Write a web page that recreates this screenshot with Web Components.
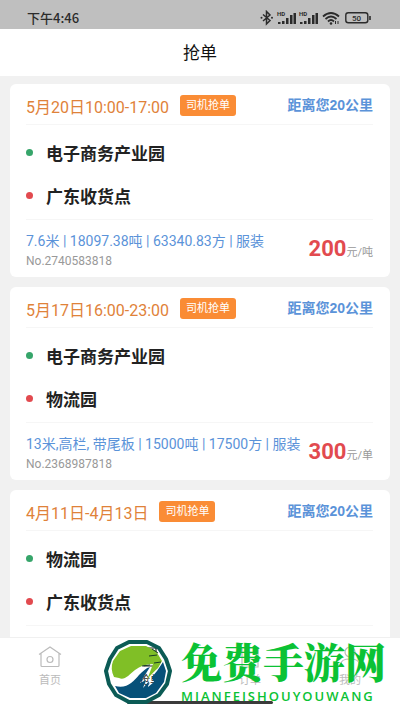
<!DOCTYPE html>
<html lang="zh-CN">
<head>
<meta charset="UTF-8">
<meta name="viewport" content="width=device-width, initial-scale=1">
<title>抢单</title>
<style>
:root {
  --page-bg: #f1f1f1;
  --orange: #fa8c35;
  --date-color: #df8239;
  --blue: #5b93d9;
  --red: #e24a4f;
  --green: #36a56a;
  --muted: #999;
}

body {
  margin: 0;
  background-color: var(--page-bg);
  color: #222;
  font-family: Roboto, "Noto Sans CJK SC", sans-serif;
}
</style>
</head>
<body>
<order-app>
  <order-card date="5月20日10:00-17:00" from="电子商务产业园" to="广东收货点"
    spec="7.6米 | 18097.38吨 | 63340.83方 | 服装" number="No.2740583818" price="200" unit="元/吨"></order-card>
  <order-card date="5月17日16:00-23:00" from="电子商务产业园" to="物流园"
    spec="13米,高栏, 带尾板 | 15000吨 | 17500方 | 服装" number="No.2368987818" price="300" unit="元/单"></order-card>
  <order-card date="4月11日-4月13日" from="物流园" to="广东收货点"></order-card>
</order-app>

<script>
class StatusBar extends HTMLElement {
  constructor() {
    super();
    this.attachShadow({ mode: 'open' });
  }

  connectedCallback() {
    this.shadowRoot.innerHTML = `
      <style>
        :host {
          display: flex;
          align-items: center;
          justify-content: space-between;
          height: 29px;
          padding: 6px 28px 0 27px;
          box-sizing: border-box;
          background-color: #bfbfbf;
          color: #2b2b2b;
          font-size: 13px;
          font-weight: 500;
        }
        time { font-family: "Noto Sans CJK SC", sans-serif; }
        svg { display: block; }
        text { font: 700 6px Roboto, sans-serif; }
        .level { font-size: 8px; font-weight: 500; }
      </style>
      <time>下午4:46</time>
      <svg width="112" height="16" viewBox="0 0 112 16" fill="none" stroke="#2b2b2b" aria-hidden="true">
        <path d="M3 4.500l7 6-3.500 3.500V1.500L10 5l-7 6" stroke-width="1.500"/>
        <circle cx="1.500" cy="7.700" r="1" fill="#2b2b2b" stroke="none"/>
        <circle cx="12" cy="7.700" r="1" fill="#2b2b2b" stroke="none"/>
        <g id="sim" fill="#2b2b2b" stroke="none">
          <text x="17" y="6">HD</text>
          <path d="M18 12h2.500v2H18zM22 11h2.500v3H22zM26 8h2.500v6H26zM30 5h2.500v9H30zM33.500 3H36v11h-2.500z"/>
        </g>
        <use href="#sim" x="22"/>
        <path d="M63 6.500q8-7 16 0M65.500 9q5.500-5 11 0M68 11.500q3-3 6 0" stroke-width="1.800"/>
        <circle cx="71" cy="13.500" r="1.300" fill="#2b2b2b" stroke="none"/>
        <path d="M75.500 11v3M78 14v-3" stroke-width="1"/>
        <rect x="85.800" y="2.800" width="22" height="10" rx="2.500" stroke-width="1.400"/>
        <path d="M110 6v4" stroke-width="1.600"/>
        <text class="level" x="92" y="10.800" fill="#2b2b2b" stroke="none">50</text>
      </svg>
    `;
  }
}

class OrderCard extends HTMLElement {
  constructor() {
    super();
    this.attachShadow({ mode: 'open' });
  }

  connectedCallback() {
    this.render();
  }

  render() {
    const attr = (name) => this.getAttribute(name) || '';

    this.shadowRoot.innerHTML = `
      <style>
        :host {
          display: block;
          flex: none;
          padding: 0 17px 0 16px;
          border-radius: 6px;
          background-color: #fff;
        }
        header {
          display: flex;
          align-items: center;
          height: 38px;
          padding-top: 2px;
          border-bottom: 1px solid #f6f6f6;
        }
        h2 {
          margin: 2px 11px 0 0;
          color: var(--date-color);
          font-size: 16px;
          font-weight: 400;
        }
        button {
          height: 21px;
          padding: 0 6px;
          border: 0;
          border-radius: 3px;
          background-color: var(--orange);
          color: #fff;
          font: 400 11px/21px Roboto, "Noto Sans CJK SC", sans-serif;
        }
        .distance {
          margin-left: auto;
          color: var(--blue);
          font: 700 14px/20px "Liberation Sans", "Noto Sans CJK SC", sans-serif;
        }
        ul {
          margin: 0;
          padding: 6px 0 2px;
          list-style: none;
          border-bottom: 1px solid #f6f6f6;
        }
        li {
          display: flex;
          align-items: center;
          gap: 13px;
          height: 43px;
          font-size: 17px;
          font-weight: 600;
        }
        li::before {
          content: "";
          width: 7px;
          height: 7px;
          border-radius: 50%;
          background-color: var(--green);
        }
        li:last-child::before { background-color: var(--red); }
        footer {
          display: flex;
          align-items: center;
          justify-content: space-between;
          height: 57px;
          white-space: nowrap;
        }
        p { margin: 0; }
        .summary {
          padding-top: 4px;
          line-height: 20px;
        }
        .spec {
          color: var(--blue);
          font-size: 14px;
        }
        .number {
          color: var(--muted);
          font-size: 12px;
        }
        .price {
          color: var(--muted);
          font-size: 11px;
        }
        strong {
          color: var(--red);
          font-size: 22px;
          line-height: 24px;
        }
      </style>
      <header>
        <h2>${attr('date')}</h2>
        <button type="button">司机抢单</button>
        <span class="distance">距离您20公里</span>
      </header>
      <ul>
        <li>${attr('from')}</li>
        <li>${attr('to')}</li>
      </ul>
      <footer>
        <div class="summary">
          <p class="spec">${attr('spec')}</p>
          <p class="number">${attr('number')}</p>
        </div>
        <p class="price"><strong>${attr('price')}</strong>${attr('unit')}</p>
      </footer>
    `;
  }
}

class TabItem extends HTMLElement {
  constructor() {
    super();
    this.attachShadow({ mode: 'open' });
  }

  connectedCallback() {
    this.shadowRoot.innerHTML = `
      <style>
        :host {
          display: block;
          flex: 1;
          color: #bbb;
        }
        :host([active]) { color: #222; }
        a {
          display: flex;
          flex-direction: column;
          align-items: center;
          gap: 3px;
          padding-top: 7px;
          color: inherit;
          font-size: 11px;
          line-height: 18px;
          text-decoration: none;
        }
      </style>
      <a href="#"><slot name="icon"></slot><slot></slot></a>
    `;
  }
}

class TabBar extends HTMLElement {
  constructor() {
    super();
    this.attachShadow({ mode: 'open' });
  }

  connectedCallback() {
    this.shadowRoot.innerHTML = `
      <style>
        :host {
          display: block;
          flex: none;
          height: 74px;
          box-sizing: border-box;
          border-top: 1px solid #f0f0f0;
          background-color: #fff;
        }
        nav { display: flex; }
        svg {
          fill: none;
          stroke: currentColor;
          stroke-width: 1.2;
        }
      </style>
      <nav>
        <tab-item>
          <svg slot="icon" width="24" height="24" viewBox="0 0 24 24"><path d="M1 9.500L12 2l11 7.500M3 8.500V20.500q0 1 1 1h16q1 0 1-1V8.500"/><circle cx="12" cy="14.500" r="3"/></svg>
          首页
        </tab-item>
        <tab-item active>
          <svg slot="icon" width="24" height="24" viewBox="0 0 24 24"><path d="M6 3h12v18H6zM9 8h6M9 12h6"/></svg>
          抢单
        </tab-item>
        <tab-item>
          <svg slot="icon" width="24" height="24" viewBox="0 0 24 24"><path d="M4 3h16v19H4zM8 8h8M8 13h8"/></svg>
          订单
        </tab-item>
        <tab-item>
          <svg slot="icon" width="24" height="24" viewBox="0 0 24 24"><circle cx="12" cy="7" r="5"/><path d="M3 22v-3q0-5 9-5t9 5v3"/></svg>
          我的
        </tab-item>
      </nav>
    `;
  }
}

class SiteMark extends HTMLElement {
  constructor() {
    super();
    this.attachShadow({ mode: 'open' });
  }

  connectedCallback() {
    this.shadowRoot.innerHTML = `
      <style>
        :host {
          display: flex;
          gap: 9px;
          color: #0bc234;
          white-space: nowrap;
        }
        svg { flex: none; }
        .name {
          font: 900 41px/44px "Noto Serif CJK SC", "Noto Sans CJK SC", serif;
        }
        .latin {
          margin-top: 5px;
          font: 600 13px/16px "Open Sans", sans-serif;
          letter-spacing: 2px;
        }
        div > * { display: block; }
      </style>
      <svg width="68" height="66" viewBox="0 0 68 66" aria-hidden="true">
        <path d="M25 3L43 3 55 9 62 20 66 32 63 45 55 56 42 63 25 63 12 56 5 45 2 32 6 20 13 9z" fill="none" stroke="#0b5b55" stroke-width="4" stroke-linejoin="round"/>
        <path d="M10 38Q6 30 9 22L16 12 27 7H42L52 12 58 22 54 29C50 33 46 36 43 41L49 25C42 25 36 27 31 31C25 36 20 42 15 39z" fill="#80bf26"/>
        <path d="M11 47C23 50 29 43 35 36 39 32 42 29 46 28L36 44 42 41 39 49 45 42 44 48 50 43 48 38 53 32 59 23 62 32 60 43 52 54 42 59H26L15 54z" fill="#075179"/>
        <path d="M48 10l6 4M53 16l-8 1M57 23l-7 1M46 26l-8 1" stroke="#173c24" fill="none"/>
      </svg>
      <div>
        <span class="name">免费手游网</span>
        <span class="latin">MIANFEISHOUYOUWANG</span>
      </div>
    `;
  }
}

class OrderApp extends HTMLElement {
  constructor() {
    super();
    this.attachShadow({ mode: 'open' });
  }

  connectedCallback() {
    this.shadowRoot.innerHTML = `
      <style>
        :host {
          position: relative;
          display: flex;
          flex-direction: column;
          height: 100vh;
          overflow: hidden;
        }
        h1 {
          flex: none;
          margin: 0;
          padding-top: 2px;
          background-color: #fff;
          color: #111;
          font-size: 17px;
          font-weight: 400;
          line-height: 45px;
          text-align: center;
        }
        main {
          display: flex;
          flex: 1;
          flex-direction: column;
          gap: 10px;
          min-height: 0;
          padding: 8px 10px 0;
          overflow: hidden;
        }
        status-bar { flex: none; }
        .home-indicator {
          position: absolute;
          bottom: 7px;
          left: 50%;
          width: 146px;
          height: 3px;
          border-radius: 2px;
          background-color: #3b3b3b;
          transform: translateX(-50%);
        }
        site-mark {
          position: absolute;
          right: 14px;
          bottom: 6px;
        }
      </style>
      <status-bar></status-bar>
      <h1>抢单</h1>
      <main><slot></slot></main>
      <tab-bar></tab-bar>
      <div class="home-indicator"></div>
      <site-mark></site-mark>
    `;
  }
}

customElements.define('status-bar', StatusBar);
customElements.define('order-card', OrderCard);
customElements.define('tab-item', TabItem);
customElements.define('tab-bar', TabBar);
customElements.define('site-mark', SiteMark);
customElements.define('order-app', OrderApp);
</script>
</body>
</html>
